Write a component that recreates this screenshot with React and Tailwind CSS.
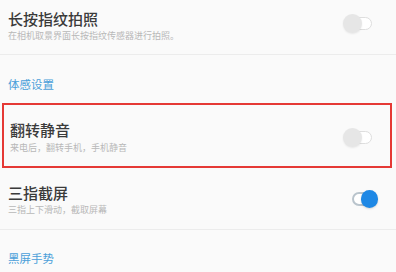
import React from "react";

const font = { fontFamily: '"Noto Sans CJK SC", "Noto Sans", sans-serif' };

function ToggleOff() {
  return (
    <div className="relative w-[29px] h-[19px] shrink-0">
      <span className="absolute right-0 top-[3px] w-[22px] h-[13px] rounded-full border border-[#dedede] bg-white" />
      <span className="absolute left-0 top-0 w-[19px] h-[19px] rounded-full bg-[#e6e6e6] shadow-[0_1px_2px_rgba(0,0,0,0.08)]" />
    </div>
  );
}

function ToggleOn() {
  return (
    <div className="relative w-[26px] h-[18px] shrink-0">
      <span className="absolute left-0 top-[2px] w-[20px] h-[14px] rounded-full border-2 border-[#b9c4cc] bg-white" />
      <span className="absolute right-0 top-0 w-[17px] h-[18px] rounded-full bg-[#1e88e5] shadow-[0_1px_2px_rgba(0,0,0,0.15)]" />
    </div>
  );
}

function TextBlock({ title, sub, gap }) {
  return (
    <div className="flex flex-col">
      <p className="text-[15px] leading-[15px] font-medium text-[#3a3a3a]">{title}</p>
      <p className={`text-[9px] leading-[10px] text-[#b8b8b8] ${gap}`}>{sub}</p>
    </div>
  );
}

export default function App() {
  return (
    <div style={font} className="w-[396px] h-[272px] overflow-hidden bg-[#fafafa] flex flex-col">
      {/* 长按指纹拍照 */}
      <div className="h-[55px] shrink-0 flex items-start justify-between pl-[8px] pr-[24px] pt-[11px] border-b border-[#ececec]">
        <TextBlock title="长按指纹拍照" sub="在相机取景界面长按指纹传感器进行拍照。" gap="mt-[5px]" />
        <div className="mt-[3px]">
          <ToggleOff />
        </div>
      </div>

      {/* 体感设置 */}
      <div className="h-[48px] shrink-0 pl-[8px] pt-[23px]">
        <p className="text-[11.5px] leading-[12px] text-[#4a9fd9]">体感设置</p>
      </div>

      {/* 翻转静音 (highlighted) */}
      <div className="h-[65px] shrink-0 ml-[2px] mr-[4px] border-2 border-[#e53935] flex items-start justify-between pl-[6px] pr-[18px] pt-[17px]">
        <TextBlock title="翻转静音" sub="来电后，翻转手机，手机静音" gap="mt-[6px]" />
        <div className="mt-[6px]">
          <ToggleOff />
        </div>
      </div>

      {/* 三指截屏 */}
      <div className="h-[62px] shrink-0 flex items-start justify-between pl-[8px] pr-[18px] pt-[17px] border-b border-[#ececec]">
        <TextBlock title="三指截屏" sub="三指上下滑动，截取屏幕" gap="mt-[5px]" />
        <div className="mt-[5px]">
          <ToggleOn />
        </div>
      </div>

      {/* 黑屏手势 */}
      <div className="flex-1 pl-[8px] pt-[22px]">
        <p className="text-[11.5px] leading-[12px] text-[#4a9fd9]">黑屏手势</p>
      </div>
    </div>
  );
}
